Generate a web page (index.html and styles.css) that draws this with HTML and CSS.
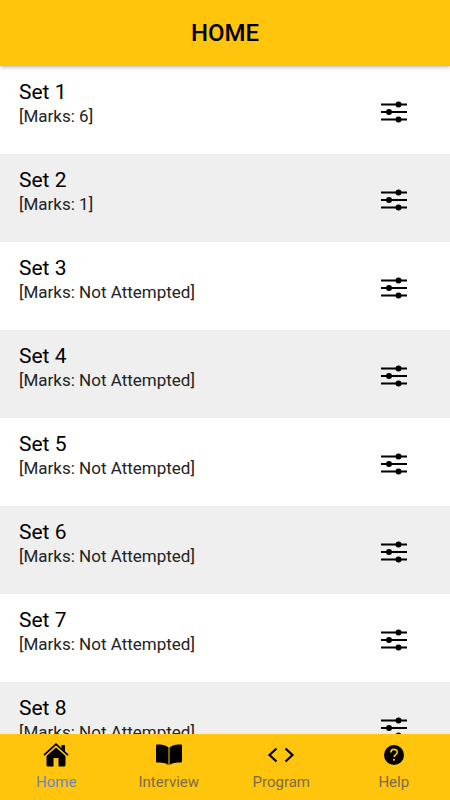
FILE: index.html
```html
<!DOCTYPE html>
<html lang="en">
<head>
    <meta charset="UTF-8">
    <meta name="viewport" content="width=device-width, initial-scale=1">
    <title>Home</title>
    <link rel="stylesheet" href="styles.css">
</head>
<body>
<svg class="defs" aria-hidden="true">
    <symbol id="options" viewBox="0 0 26 22">
        <path d="M0 3.5h26M0 11h26M0 18.5h26" stroke="#000" stroke-width="2"/>
        <circle cx="17.5" cy="3.5" r="3"/>
        <circle cx="8" cy="11" r="3"/>
        <circle cx="17.5" cy="18.5" r="3"/>
    </symbol>
</svg>
<header class="toolbar"><h1 class="title">HOME</h1></header>
<main class="content">
    <ul class="list">
        <li class="item">
            <div class="label"><h2>Set 1</h2><p>[Marks: 6]</p></div>
            <button class="options" type="button" aria-label="Options for set 1"><svg><use href="#options"/></svg></button>
        </li>
        <li class="item">
            <div class="label"><h2>Set 2</h2><p>[Marks: 1]</p></div>
            <button class="options" type="button" aria-label="Options for set 2"><svg><use href="#options"/></svg></button>
        </li>
        <li class="item">
            <div class="label"><h2>Set 3</h2><p>[Marks: Not Attempted]</p></div>
            <button class="options" type="button" aria-label="Options for set 3"><svg><use href="#options"/></svg></button>
        </li>
        <li class="item">
            <div class="label"><h2>Set 4</h2><p>[Marks: Not Attempted]</p></div>
            <button class="options" type="button" aria-label="Options for set 4"><svg><use href="#options"/></svg></button>
        </li>
        <li class="item">
            <div class="label"><h2>Set 5</h2><p>[Marks: Not Attempted]</p></div>
            <button class="options" type="button" aria-label="Options for set 5"><svg><use href="#options"/></svg></button>
        </li>
        <li class="item">
            <div class="label"><h2>Set 6</h2><p>[Marks: Not Attempted]</p></div>
            <button class="options" type="button" aria-label="Options for set 6"><svg><use href="#options"/></svg></button>
        </li>
        <li class="item">
            <div class="label"><h2>Set 7</h2><p>[Marks: Not Attempted]</p></div>
            <button class="options" type="button" aria-label="Options for set 7"><svg><use href="#options"/></svg></button>
        </li>
        <li class="item">
            <div class="label"><h2>Set 8</h2><p>[Marks: Not Attempted]</p></div>
            <button class="options" type="button" aria-label="Options for set 8"><svg><use href="#options"/></svg></button>
        </li>
    </ul>
</main>
<nav class="tabs">
    <a class="tab active" href="#home">
        <svg viewBox="0 0 28 28">
            <path d="M14 6.500L4.500 15V24q0 1.500 1.500 1.500H11.500V17h5v8.500H22q1.500 0 1.500-1.500v-9z"/>
            <path d="M2 14.500L14 3.500l12 11" fill="none" stroke="#ffc40c" stroke-width="3.500"/>
            <path d="M2 14.200L14 3.200l12 11" fill="none" stroke="#000" stroke-width="1.800"/>
            <path d="M19.500 4H23v6.500L19.500 7.300z"/>
        </svg>
        <span>Home</span>
    </a>
    <a class="tab" href="#interview">
        <svg viewBox="0 0 28 28">
            <path d="M1 4.500q0-1 1-1c4.500 0 9 .5 11.500 3v17.500C10 21.500 6 21.500 2 21.500q-1 0-1-1z"/>
            <path d="M27 4.500q0-1-1-1c-4.500 0-9 .5-11.500 3v17.500c3.500-2.500 7.500-2.500 11.500-2.500q1 0 1-1z"/>
        </svg>
        <span>Interview</span>
    </a>
    <a class="tab" href="#program">
        <svg viewBox="0 0 28 28">
            <path d="M9.500 7.500L2.500 14l7 6.500M18.500 7.500l7 6.500-7 6.500" fill="none" stroke="#000" stroke-width="2.200"/>
        </svg>
        <span>Program</span>
    </a>
    <a class="tab" href="#help">
        <svg viewBox="0 0 28 28">
            <circle cx="14" cy="14" r="10"/>
            <path d="M10.800 11.500c0-4.200 6.500-4 6.500-.5 0 2.600-3.200 2.500-3.200 5" fill="none" stroke="#ffc40c" stroke-width="1.600"/>
            <circle cx="14" cy="18.800" r="1.100" fill="#ffc40c"/>
        </svg>
        <span>Help</span>
    </a>
</nav>
</body>
</html>
```
FILE: styles.css
```css
*{
    margin:0;
    padding:0;
    box-sizing: border-box;
}
body{
    display: flex;
    flex-direction: column;
    height:100vh;
    background-color: #fff;
    color:#000;
    font-family: Roboto, "Liberation Sans", sans-serif;
}
.defs{
    display: none;
}
/* 顶部标题 */
.toolbar{
    flex:none;
    padding:17px 16px;
    background-color: #ffc40c;
    box-shadow: 0 1px 4px rgba(0,0,0,.3);
    text-align: center;
    z-index: 1;
}
.title{
    font-size:24px;
    line-height: 32px;
    font-weight: 500;
}
/* 列表 */
.content{
    flex:1;
    min-height:0;
    overflow: hidden;
}
.list{
    list-style: none;
}
.item{
    display: flex;
    justify-content: space-between;
    padding:13px 43px 27px 19px;
}
.item:nth-child(even){
    background-color: #efefef;
}
.label h2{
    font-size:21px;
    line-height: 26px;
    font-weight: 400;
}
.label p{
    font-size:17px;
    line-height: 22px;
    color:#222;
}
.options{
    align-self: flex-end;
    padding-bottom:4px;
    border:0;
    background: none;
    cursor: pointer;
}
.options svg{
    display: block;
    width:26px;
    height:22px;
}
/* 底部导航 */
.tabs{
    flex:none;
    display: flex;
    background-color: #ffc40c;
}
.tab{
    flex:1;
    display: flex;
    flex-direction: column;
    align-items: center;
    gap:4px;
    padding:7px 0 9px;
    color:#7a6c4a;
    font-size:15px;
    line-height: 18px;
    text-decoration: none;
}
.tab svg{
    width:28px;
    height:28px;
}
.tab.active{
    color:#6c83c4;
}
```
